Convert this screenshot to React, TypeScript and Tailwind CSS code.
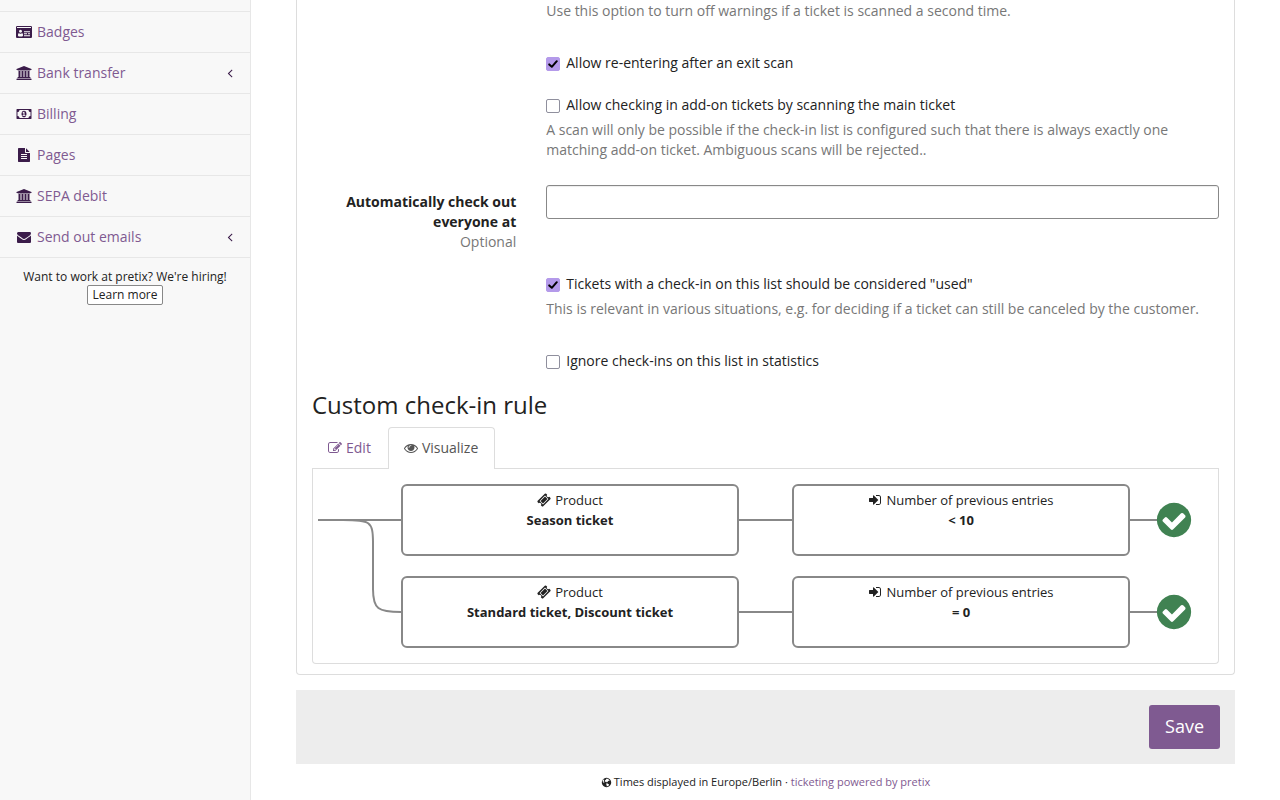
import React from "react";

const PATHS = {
  idCard:
    "M896 1324q0-54-7.5-100.5t-24.5-90-51-68.5-81-25q-64 64-156 64t-156-64q-47 0-81 25t-51 68.5-24.5 90-7.5 100.5q0 55 31.5 93.5t75.5 38.5h426q44 0 75.5-38.5t31.5-93.5zM768 800q0-80-56-136t-136-56-136 56-56 136 56 136 136 56 136-56 56-136zM1792 1408v-64q0-14-9-23t-23-9h-704q-14 0-23 9t-9 23v64q0 14 9 23t23 9h704q14 0 23-9t9-23zM1408 1152v-64q0-14-9-23t-23-9h-320q-14 0-23 9t-9 23v64q0 14 9 23t23 9h320q14 0 23-9t9-23zM1792 1152v-64q0-14-9-23t-23-9h-192q-14 0-23 9t-9 23v64q0 14 9 23t23 9h192q14 0 23-9t9-23zM1792 896v-64q0-14-9-23t-23-9h-704q-14 0-23 9t-9 23v64q0 14 9 23t23 9h704q14 0 23-9t9-23zM128 384h1792v-96q0-14-9-23t-23-9h-1728q-14 0-23 9t-9 23v96zM2048 288v1216q0 66-47 113t-113 47h-1728q-66 0-113-47t-47-113v-1216q0-66 47-113t113-47h1728q66 0 113 47t47 113z",
  university:
    "M960 0l960 384v128h-128q0 26-20.5 45t-48.5 19h-1526q-28 0-48.5-19t-20.5-45h-128v-128zm-704 640h256v768h128v-768h256v768h128v-768h256v768h128v-768h256v768h59q28 0 48.5 19t20.5 45v64h-1664v-64q0-26 20.5-45t48.5-19h59v-768zm1595 960q28 0 48.5 19t20.5 45v128h-1920v-128q0-26 20.5-45t48.5-19h1782z",
  money:
    "M768 1152h384v-96h-128v-448h-114l-148 137 77 80q42-37 55-57h2v288h-128v96zm512-256q0 70-21 142t-59.5 134-101.5 101-138 39-138-39-101.5-101-59.5-134-21-142 21-142 59.5-134 101.5-101 138-39 138 39 101.5 101 59.5 134 21 142zm512 256v-512q-106 0-181-75t-75-181h-1152q0 106-75 181t-181 75v512q106 0 181 75t75 181h1152q0-106 75-181t181-75zm128-832v1152q0 26-19 45t-45 19h-1792q-26 0-45-19t-19-45v-1152q0-26 19-45t45-19h1792q26 0 45 19t19 45z",
  fileText:
    "M1596 476q14 14 28 36h-472v-472q22 14 36 28zm-476 164h544v1056q0 40-28 68t-68 28h-1344q-40 0-68-28t-28-68v-1600q0-40 28-68t68-28h800v544q0 40 28 68t68 28zm160 736v-64q0-14-9-23t-23-9h-704q-14 0-23 9t-9 23v64q0 14 9 23t23 9h704q14 0 23-9t9-23zm0-256v-64q0-14-9-23t-23-9h-704q-14 0-23 9t-9 23v64q0 14 9 23t23 9h704q14 0 23-9t9-23zm0-256v-64q0-14-9-23t-23-9h-704q-14 0-23 9t-9 23v64q0 14 9 23t23 9h704q14 0 23-9t9-23z",
  envelope:
    "M1792 710v794q0 66-47 113t-113 47h-1472q-66 0-113-47t-47-113v-794q44 49 101 87 362 246 497 345 57 42 92.5 65.5t94.5 48 110 24.5h2q51 0 110-24.5t94.5-48 92.5-65.5q170-123 498-345 57-39 100-87zm0-294q0 79-49 151t-122 123q-376 261-468 325-10 7-42.5 31t-54 38.5-52 32.5-57.5 27-50 9h-2q-23 0-50-9t-57.5-27-52-32.5-54-38.5-42.5-31q-91-64-262-182.5t-205-142.5q-62-42-117-115.5t-55-136.5q0-78 41.5-130t118.5-52h1472q65 0 112.5 47t47.5 113z",
  angleLeft:
    "M1203 544q0 13-10 23l-393 393 393 393q10 10 10 23t-10 23l-50 50q-10 10-23 10t-23-10l-466-466q-10-10-10-23t10-23l466-466q10-10 23-10t23 10l50 50q10 10 10 23z",
  edit:
    "M888 1184l116-116-152-152-116 116v56h96v96h56zm440-720q-16-16-33 1l-350 350q-17 17-1 33t33-1l350-350q17-17 1-33zm80 594v190q0 119-84.5 203.5t-203.5 84.5h-832q-119 0-203.5-84.5t-84.5-203.5v-832q0-119 84.5-203.5t203.5-84.5h832q63 0 117 25 15 7 18 23 3 17-9 29l-49 49q-14 14-32 8-23-6-45-6h-832q-66 0-113 47t-47 113v832q0 66 47 113t113 47h832q66 0 113-47t47-113v-126q0-13 9-22l64-64q15-15 35-7t20 29zm-96-738l288 288-672 672h-288v-288zm444 132l-92 92-288-288 92-92q28-28 68-28t68 28l152 152q28 28 28 68t-28 68z",
  eye:
    "M1664 960q-152-236-381-353 61 104 61 225 0 185-131.5 316.5t-316.5 131.5-316.5-131.5-131.5-316.5q0-121 61-225-229 117-381 353 133 205 333.5 326.5t434.5 121.5 434.5-121.5 333.5-326.5zm-720-384q0-20-14-34t-34-14q-125 0-214.5 89.5t-89.5 214.5q0 20 14 34t34 14 34-14 14-34q0-86 61-147t147-61q20 0 34-14t14-34zm848 384q0 34-20 69-140 230-376.5 368.5t-499.5 138.5-499.5-139-376.5-368q-20-35-20-69t20-69q140-229 376.5-368t499.5-139 499.5 139 376.5 368q20 35 20 69z",
  ticket:
    "M1024 452l316 316-572 572-316-316zm-211 979l618-618q19-19 19-45t-19-45l-362-362q-18-18-45-18t-45 18l-618 618q-19 19-19 45t19 45l362 362q18 18 45 18t45-18zm889-637l-907 908q-37 37-90.5 37t-90.5-37l-126-126q56-56 56-136t-56-136-136-56-136 56l-125-126q-37-37-37-90.5t37-90.5l907-906q37-37 90.5-37t90.5 37l125 125q-56 56-56 136t56 136 136 56 136-56l126 125q37 37 37 90.5t-37 90.5z",
  signIn:
    "M1312 896q0 26-19 45l-544 544q-19 19-45 19t-45-19-19-45v-288h-448q-26 0-45-19t-19-45v-384q0-26 19-45t45-19h448v-288q0-26 19-45t45-19 45 19l544 544q19 19 19 45zm352-352v704q0 119-84.5 203.5t-203.5 84.5h-320q-13 0-22.5-9.5t-9.5-22.5q0-4-1-20t-.5-26.5 3-23.5 10-19.5 20.5-6.5h320q66 0 113-47t47-113v-704q0-66-47-113t-113-47h-312l-11.5-1-11.5-3-8-5.5-7-9-2-13.5q0-4-1-20t-.5-26.5 3-23.5 10-19.5 20.5-6.5h320q119 0 203.5 84.5t84.5 203.5z",
  checkCircle:
    "M1412 734q0-28-18-46l-91-90q-19-19-45-19t-45 19l-408 407-226-226q-19-19-45-19t-45 19l-91 90q-18 18-18 46 0 27 18 45l362 362q19 19 45 19 27 0 46-19l543-543q18-18 18-45zm252 162q0 209-103 385.5t-279.5 279.5-385.5 103-385.5-103-279.5-279.5-103-385.5 103-385.5 279.5-279.5 385.5-103 385.5 103 279.5 279.5 103 385.5z",
  globe:
    "M896 128q209 0 385.5 103t279.5 279.5 103 385.5-103 385.5-279.5 279.5-385.5 103-385.5-103-279.5-279.5-103-385.5 103-385.5 279.5-279.5 385.5-103zM1170 649l60-40 120 30 40-60-70-110-150-130-170-60-130 10-80 60 70 60-60 70-110-30-50 80 60 60-90 90 20 90 90 30 60-50 80 30 30 80 110 10 60-70 40-80zM420 400l-110 130-50 140 60 120 90 130 110 50 40-70-90-60 20-70-60-90 70-110 30-120zM940 1000l-90 90 10 130 70 90-20 200 100-10 190-80 120-110-50-120-110-50-90-90z",
};

type IconName = keyof typeof PATHS;

function Icon({ name, width = 1792, className }: { name: IconName; width?: number; className: string }) {
  return (
    <svg viewBox={`0 0 ${width} 1792`} className={className} fill="currentColor" fillRule="evenodd" aria-hidden="true">
      <path d={PATHS[name]} />
    </svg>
  );
}

const NAV: { label: string; icon: IconName; width: number; size: string; more?: boolean }[] = [
  { label: "Badges", icon: "idCard", width: 2048, size: "h-3.5 w-4" },
  { label: "Bank transfer", icon: "university", width: 1920, size: "h-3.5 w-4", more: true },
  { label: "Billing", icon: "money", width: 1920, size: "h-3.5 w-4" },
  { label: "Pages", icon: "fileText", width: 1792, size: "h-3.5 w-3.5" },
  { label: "SEPA debit", icon: "university", width: 1920, size: "h-3.5 w-4" },
  { label: "Send out emails", icon: "envelope", width: 1792, size: "h-3.5 w-3.5", more: true },
];

function Sidebar() {
  return (
    <aside className="w-[251px] shrink-0 border-r border-[#e7e7e7] bg-[#f8f8f8]">
      <nav className="mt-[11px] border-t border-[#e7e7e7]">
        <ul>
          {NAV.map((item) => (
            <li key={item.label} className="border-b border-[#e7e7e7]">
              <a href="#" className="flex items-center py-2.5 pr-[13px] pl-[15px] text-[#7f5a91]">
                <span className="mr-1 flex w-[18px] justify-center text-[#3b1c4a]">
                  <Icon name={item.icon} width={item.width} className={item.size} />
                </span>
                <span className="grow">{item.label}</span>
                {item.more && <Icon name="angleLeft" className="size-3.5 text-[#3b1c4a]" />}
              </a>
            </li>
          ))}
        </ul>
      </nav>
      <div className="pt-2.5 text-center text-xs leading-[17px]">
        <p>Want to work at pretix? We're hiring!</p>
        <a href="#" className="inline-block rounded-xs border border-[#888] bg-white px-1 leading-[18px]">
          Learn more
        </a>
      </div>
    </aside>
  );
}

function Check({ id, label, help, checked, className }: { id: string; label: string; help?: string; checked?: boolean; className?: string }) {
  return (
    <div className={className}>
      <label htmlFor={id} className="flex items-center gap-1.5">
        <span className="relative mt-0.5 flex size-3.5">
          <input
            id={id}
            type="checkbox"
            defaultChecked={checked}
            className="peer size-3.5 appearance-none rounded-xs border border-[#8f8f9d] bg-white checked:border-[#b49aea] checked:bg-[#b49aea]"
          />
          <svg viewBox="0 0 14 14" className="pointer-events-none absolute inset-0 hidden size-3.5 peer-checked:block" aria-hidden="true">
            <path d="M3.2 7.4L5.8 9.8L10.8 4.2" fill="none" stroke="#000" strokeWidth="2" strokeLinecap="round" strokeLinejoin="round" />
          </svg>
        </span>
        <span>{label}</span>
      </label>
      {help && <p className="mt-[5px] text-[#777]">{help}</p>}
    </div>
  );
}

function Node({ icon, title, value, className }: { icon: IconName; title: string; value: string; className: string }) {
  return (
    <div className={`absolute h-[72px] w-[338px] rounded-md border-2 border-[#888] bg-white pt-1 text-center text-[13px] leading-5 ${className}`}>
      <div className="flex items-center justify-center gap-1">
        <Icon name={icon} className="size-3.5" />
        <span>{title}</span>
      </div>
      <strong className="block">{value}</strong>
    </div>
  );
}

function RuleGraph() {
  return (
    <div className="relative h-[195px] overflow-hidden rounded-b border border-t-0 border-[#ddd]">
      <svg className="absolute top-0 left-0 h-[194px] w-[906px]" fill="none" stroke="#888" strokeWidth="2" aria-hidden="true">
        <path d="M5 51H846M5 51H30C57 51 60 52 60 74V120C60 140 65 143 88 143H846" />
      </svg>
      <Node icon="ticket" title="Product" value="Season ticket" className="top-[15px] left-[88px]" />
      <Node icon="signIn" title="Number of previous entries" value="< 10" className="top-[15px] left-[479px]" />
      <Node icon="ticket" title="Product" value="Standard ticket, Discount ticket" className="top-[107px] left-[88px]" />
      <Node icon="signIn" title="Number of previous entries" value="= 0" className="top-[107px] left-[479px]" />
      <Icon name="checkCircle" className="absolute top-[31px] left-[841px] size-10 text-[#408252]" />
      <Icon name="checkCircle" className="absolute top-[123px] left-[841px] size-10 text-[#408252]" />
    </div>
  );
}

export default function App() {
  return (
    <div className="flex min-h-screen bg-white font-['Open_Sans',sans-serif] text-sm leading-5 text-[#222]">
      <Sidebar />
      <main className="grow px-[45px]">
        <form>
          <div className="rounded-b border border-t-0 border-[#ddd] px-[15px] pb-2.5">
            <div className="-mx-[15px] grid grid-cols-[1fr_3fr]">
              <div className="col-start-2 px-[15px] pt-px">
                <p className="text-[#777]">Use this option to turn off warnings if a ticket is scanned a second time.</p>
                <Check id="reenter" className="mt-8" checked label="Allow re-entering after an exit scan" />
                <Check
                  id="addons"
                  className="mt-[22px]"
                  label="Allow checking in add-on tickets by scanning the main ticket"
                  help="A scan will only be possible if the check-in list is configured such that there is always exactly one matching add-on ticket. Ambiguous scans will be rejected.."
                />
              </div>
              <label htmlFor="checkout" className="mt-8 px-[15px] text-right font-bold">
                Automatically check out everyone at
                <span className="block font-normal text-[#777]">Optional</span>
              </label>
              <div className="px-[15px] pt-[25px]">
                <input
                  id="checkout"
                  type="text"
                  className="block h-[34px] w-full rounded-[3px] border border-[#888] bg-white px-3 shadow-[inset_0_1px_1px_rgba(0,0,0,0.075)]"
                />
              </div>
              <div className="col-start-2 mt-[22px] px-[15px]">
                <Check
                  id="used"
                  checked
                  label={'Tickets with a check-in on this list should be considered "used"'}
                  help="This is relevant in various situations, e.g. for deciding if a ticket can still be canceled by the customer."
                />
                <Check id="stats" className="mt-8" label="Ignore check-ins on this list in statistics" />
              </div>
            </div>
            <h3 className="mt-5 text-2xl leading-7">Custom check-in rule</h3>
            <div role="tablist" className="mt-2 flex">
              <button type="button" role="tab" className="flex items-center gap-1 border-b border-[#ddd] pt-px pr-[15px] pl-4 text-[#7f5a91]">
                <Icon name="edit" className="size-3.5" />
                Edit
              </button>
              <span className="w-0.5 border-b border-[#ddd]" />
              <button
                type="button"
                role="tab"
                aria-selected="true"
                className="flex h-[42px] items-center gap-1 rounded-t border border-b-0 border-[#ddd] pr-4 pb-px pl-[15px] text-[#555]"
              >
                <Icon name="eye" className="size-3.5" />
                Visualize
              </button>
              <span className="grow border-b border-[#ddd]" />
            </div>
            <RuleGraph />
          </div>
          <div className="mt-[15px] flex justify-end bg-[#ededed] p-[15px]">
            <button type="submit" className="h-11 rounded-[3px] bg-[#7f5a91] px-4 pb-0.5 text-lg text-white">
              Save
            </button>
          </div>
        </form>
        <footer className="flex items-center justify-center pt-2 text-[11px]">
          <Icon name="globe" className="mr-0.5 size-[11px]" />
          <span>
            Times displayed in Europe/Berlin ·{" "}
            <a href="#" className="text-[#7f5a91]">
              ticketing powered by pretix
            </a>
          </span>
        </footer>
      </main>
    </div>
  );
}
